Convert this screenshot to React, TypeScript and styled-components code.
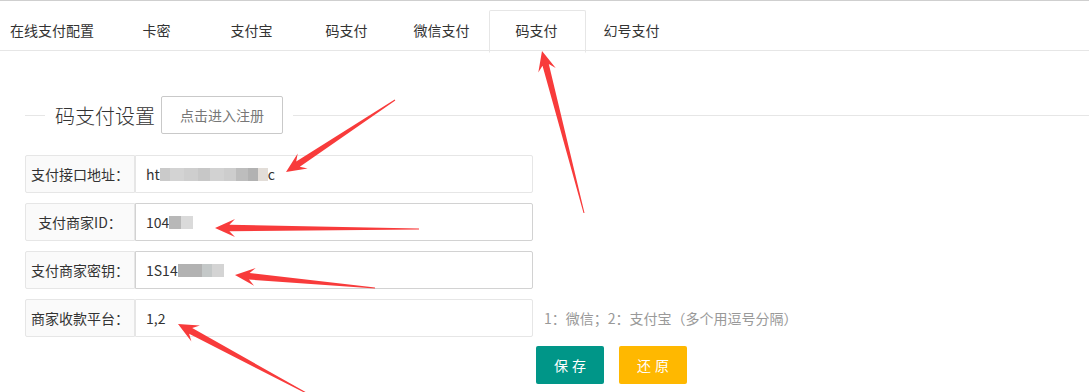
import React from 'react';
import styled, { createGlobalStyle } from 'styled-components';

const GlobalStyle = createGlobalStyle`
  html, body {
    margin: 0;
    padding: 0;
    background: #fff;
  }
  body {
    font-family: "Noto Sans CJK SC", "Noto Sans", sans-serif;
    font-size: 14px;
    color: #333;
  }
  * {
    box-sizing: border-box;
  }
`;

const Page = styled.div`
  position: relative;
  width: 1089px;
  height: 392px;
  overflow: hidden;
  border-top: 1px solid #cfcfcf;
`;

const TabBar = styled.ul`
  display: flex;
  margin: 9px 0 0 -5px;
  padding: 0;
  list-style: none;
  height: 41px;
  border-bottom: 1px solid #e6e6e6;
`;

const Tab = styled.li<{ $active?: boolean }>`
  position: relative;
  box-sizing: content-box;
  min-width: 65px;
  padding: 0 15px;
  height: 40px;
  line-height: 40px;
  text-align: center;
  white-space: nowrap;
  color: #333;
  cursor: pointer;

  ${(p) =>
    p.$active &&
    `
    &::after {
      content: '';
      position: absolute;
      left: 0;
      top: 0;
      width: 100%;
      height: 41px;
      border: 1px solid #e6e6e6;
      border-bottom-color: #fff;
      border-radius: 2px 2px 0 0;
      pointer-events: none;
    }
  `}
`;

const Content = styled.div`
  padding-left: 25px;
`;

const TitleRow = styled.div`
  display: flex;
  align-items: center;
  height: 38px;
  margin-top: 45px;
`;

const Rule = styled.div<{ $grow?: boolean }>`
  height: 1px;
  background: #e6e6e6;
  width: 20px;
  ${(p) => p.$grow && 'flex: 1;'}
`;

const Legend = styled.div`
  display: flex;
  align-items: center;
  padding: 0 10px;
  font-size: 20px;
  font-weight: 300;
  color: #333;
  white-space: nowrap;
`;

const RegisterButton = styled.button`
  margin-left: 6px;
  height: 38px;
  padding: 0 18px;
  border: 1px solid #c9c9c9;
  border-radius: 2px;
  background: #fff;
  color: #777;
  font-family: inherit;
  font-size: 14px;
  line-height: 36px;
  cursor: pointer;
`;

const Form = styled.div`
  margin-top: 21px;
`;

const Row = styled.div`
  display: flex;
  align-items: center;
  height: 38px;
  margin-bottom: 10px;
`;

const Label = styled.div`
  width: 110px;
  height: 38px;
  line-height: 36px;
  border: 1px solid #e6e6e6;
  border-radius: 2px 0 0 2px;
  background: #fafafa;
  text-align: center;
  white-space: nowrap;
  color: #333;
`;

const InputBox = styled.div<{ $dark?: boolean }>`
  display: flex;
  align-items: center;
  width: 398px;
  height: 38px;
  padding-left: 10px;
  border: 1px solid ${(p) => (p.$dark ? '#d2d2d2' : '#e6e6e6')};
  border-radius: 0 2px 2px 0;
  background: #fff;
  color: #333;
  white-space: nowrap;
`;

const Mosaic = styled.span`
  display: inline-flex;
  height: 13px;
`;

const Cell = styled.span<{ $w: number; $c: string }>`
  display: block;
  width: ${(p) => p.$w}px;
  height: 100%;
  background: ${(p) => p.$c};
`;

const Hint = styled.div`
  margin-left: 11px;
  color: #999;
  white-space: nowrap;
`;

const Actions = styled.div`
  display: flex;
  gap: 15px;
  margin: -1px 0 0 511px;
`;

const Button = styled.button<{ $warm?: boolean }>`
  width: 68px;
  height: 38px;
  border: 0;
  border-radius: 2px;
  background: ${(p) => (p.$warm ? '#ffb800' : '#009688')};
  color: #fff;
  font-family: inherit;
  font-size: 14px;
  letter-spacing: 4px;
  text-indent: 4px;
  cursor: pointer;
`;

const Overlay = styled.svg`
  position: absolute;
  left: 0;
  top: 0;
  pointer-events: none;
`;

const tabs = ['在线支付配置', '卡密', '支付宝', '码支付', '微信支付', '码支付', '幻号支付'];

type Blur = [number, string][];

const fields: { label: string; value: string; blur?: Blur; dark?: boolean; hint?: string; tail?: string }[] = [
  {
    label: '支付接口地址：',
    value: 'ht',
    blur: [
      [10, '#cacaca'],
      [14, '#d3d3d3'],
      [14, '#cecece'],
      [12, '#c7c7c7'],
      [14, '#d2d2d2'],
      [12, '#cdcdcd'],
      [12, '#bdbdbd'],
      [10, '#b2b2b2'],
      [10, '#e2ddd8'],
    ],
    tail: 'c',
  },
  {
    label: '支付商家ID：',
    value: '104',
    blur: [
      [12, '#b8b8b8'],
      [12, '#dadada'],
    ],
    dark: true,
  },
  {
    label: '支付商家密钥：',
    value: '1S14',
    blur: [
      [24, '#b2b2b2'],
      [10, '#c4c8c8'],
      [12, '#d4d4d4'],
    ],
    dark: true,
  },
  { label: '商家收款平台：', value: '1,2', hint: '1：微信；2：支付宝（多个用逗号分隔）' },
];

// annotation arrows: tail -> tip
const arrows: [number, number, number, number][] = [
  [395, 99, 286, 171],
  [584, 212, 542, 50],
  [419, 228, 215, 227],
  [375, 287, 235, 274],
  [310, 394, 178, 323],
];

const arrowPoints = (x1: number, y1: number, x2: number, y2: number) => {
  const len = Math.hypot(x2 - x1, y2 - y1);
  const dx = (x2 - x1) / len;
  const dy = (y2 - y1) / len;
  const nx = -dy;
  const ny = dx;
  const head = 20;
  const headW = 18;
  const neckW = 6.5;
  const tailW = 1;
  const at = (back: number, side: number) =>
    `${(x2 - dx * back + nx * side).toFixed(1)},${(y2 - dy * back + ny * side).toFixed(1)}`;
  return [
    `${(x1 + nx * tailW / 2).toFixed(1)},${(y1 + ny * tailW / 2).toFixed(1)}`,
    at(head * 0.72, neckW / 2),
    at(head, headW / 2),
    `${x2},${y2}`,
    at(head, -headW / 2),
    at(head * 0.72, -neckW / 2),
    `${(x1 - nx * tailW / 2).toFixed(1)},${(y1 - ny * tailW / 2).toFixed(1)}`,
  ].join(' ');
};

const App = () => {
  return (
    <>
      <GlobalStyle />
      <Page>
        <TabBar>
          {tabs.map((t, i) => (
            <Tab key={i} $active={i === 5}>
              {t}
            </Tab>
          ))}
        </TabBar>

        <Content>
          <TitleRow>
            <Rule />
            <Legend>
              码支付设置
              <RegisterButton>点击进入注册</RegisterButton>
            </Legend>
            <Rule $grow />
          </TitleRow>

          <Form>
            {fields.map((f) => (
              <Row key={f.label}>
                <Label>{f.label}</Label>
                <InputBox $dark={f.dark}>
                  {f.value}
                  {f.blur && (
                    <Mosaic>
                      {f.blur.map(([w, c], i) => (
                        <Cell key={i} $w={w} $c={c} />
                      ))}
                    </Mosaic>
                  )}
                  {f.tail}
                </InputBox>
                {f.hint && <Hint>{f.hint}</Hint>}
              </Row>
            ))}
            <Actions>
              <Button>保存</Button>
              <Button $warm>还原</Button>
            </Actions>
          </Form>
        </Content>

        <Overlay width={1089} height={392} viewBox="0 0 1089 392">
          {arrows.map(([x1, y1, x2, y2], i) => (
            <polygon key={i} points={arrowPoints(x1, y1, x2, y2)} fill="#f83b3b" />
          ))}
        </Overlay>
      </Page>
    </>
  );
};

export default App;
